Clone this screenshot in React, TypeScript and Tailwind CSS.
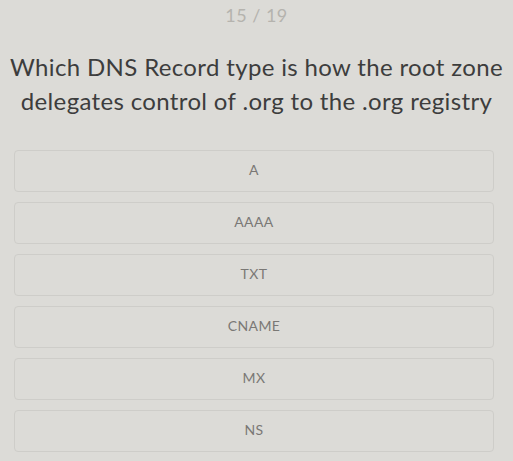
const options = ["A", "AAAA", "TXT", "CNAME", "MX", "NS"];

export default function App() {
  return (
    <div
      className="min-h-[461px] bg-[#dcdbd7] px-[14px] pt-[3px]"
      style={{ fontFamily: "Lato, 'Noto Sans', sans-serif" }}
    >
      <p className="text-center text-[18px] leading-[24px] tracking-[0.5px] text-[#b5b3ae]">15 / 19</p>
      <h1 className="-mx-[12px] mt-[23px] text-center text-[24px] leading-[34px] tracking-[0.35px] text-[#3d3d3d]">
        Which DNS Record type is how the root zone delegates control of .org to the .org registry
      </h1>
      <div className="mt-[32px] flex flex-col gap-[10px]">
        {options.map((o) => (
          <button
            key={o}
            className="h-[42px] w-[480px] rounded-[4px] border border-[#cecdc9] pb-[3px] text-[14px] tracking-[0.4px] text-[#7a7875]"
          >
            {o}
          </button>
        ))}
      </div>
    </div>
  );
}
